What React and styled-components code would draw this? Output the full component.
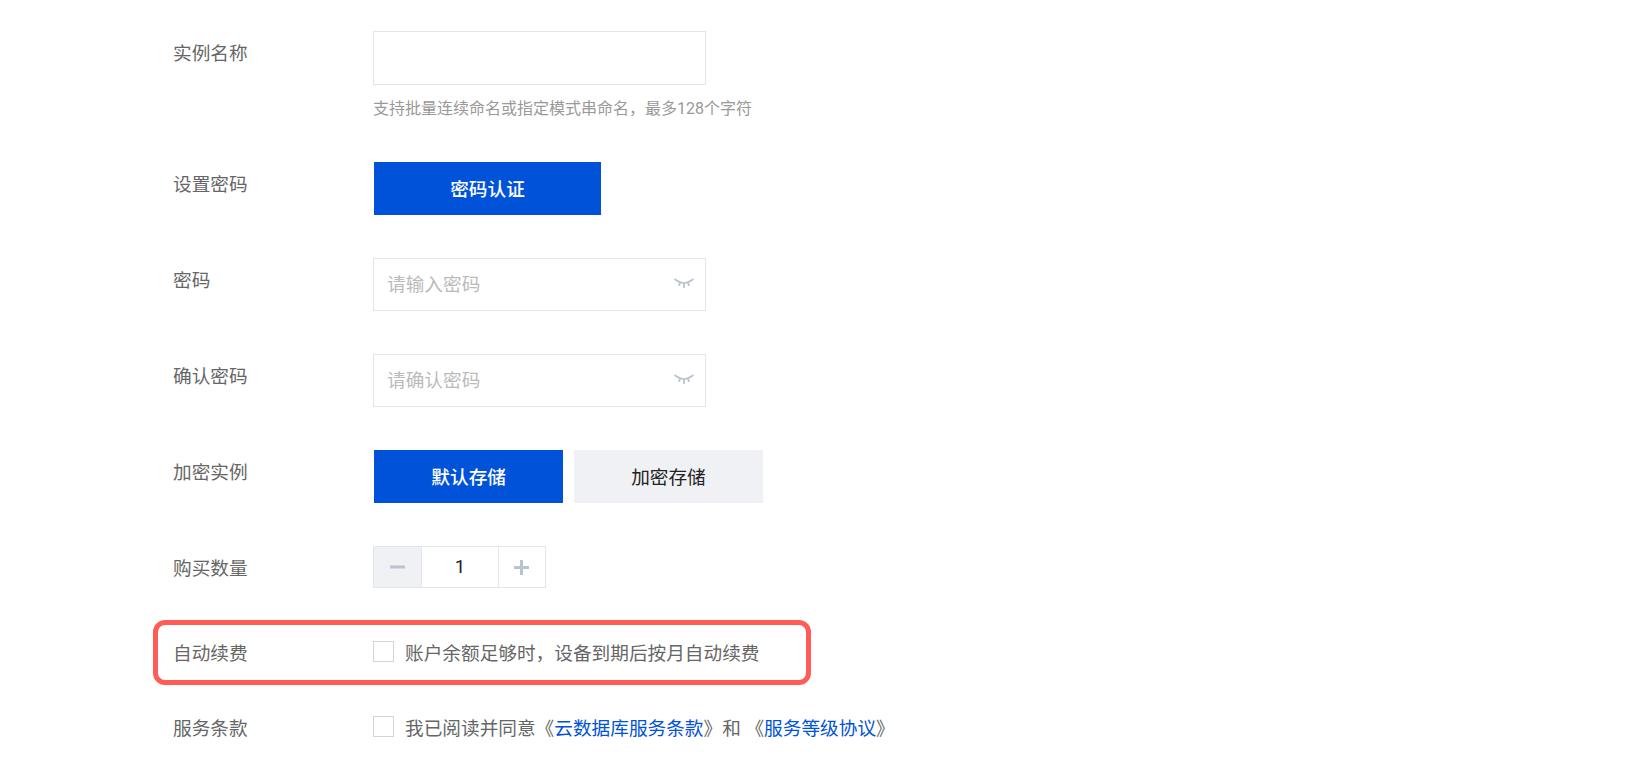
import React from "react";
import styled, { createGlobalStyle } from "styled-components";

const GlobalStyle = createGlobalStyle`
  html, body {
    margin: 0;
    padding: 0;
    background: #fff;
    overflow: hidden;
  }
  *, *::before, *::after {
    box-sizing: border-box;
  }
  body, input, button {
    font-family: Roboto, "Noto Sans CJK SC", sans-serif;
  }
`;

const EyeClosed = () => (
  <svg width="20" height="11" viewBox="0 0 20 11" fill="none" stroke="#b9c3d1" strokeWidth="1.800">
    <path d="M3 2.500C7 6 13 6 17 2.500" />
    <path d="M0.500 1L3.500 3M19.500 1L16.500 3M6 5L5 8M14 5L15 8M10 6V10" />
  </svg>
);

const Minus = () => (
  <svg width="15" height="16" viewBox="0 0 15 16" fill="#b9c3d1">
    <rect x="0" y="6.500" width="15" height="3" />
  </svg>
);

const Plus = () => (
  <svg width="15" height="15" viewBox="0 0 15 15" fill="#b9c3d1">
    <rect x="0" y="6" width="15" height="3" />
    <rect x="6" y="0" width="3" height="15" />
  </svg>
);

const PasswordField = ({ placeholder }) => (
  <InputBox>
    <PasswordInput type="password" placeholder={placeholder} />
    <EyeButton>
      <EyeClosed />
    </EyeButton>
  </InputBox>
);

export default function App() {
  return (
    <Form>
      <GlobalStyle />
      <Row $bottom={130.5}>
        <Label>实例名称</Label>
        <div>
          <TextInput type="text" />
          <Hint>支持批量连续命名或指定模式串命名，最多128个字符</Hint>
        </div>
      </Row>
      <Row $bottom={96.5}>
        <Label>设置密码</Label>
        <Segments>
          <Segment $active $width={227}>密码认证</Segment>
        </Segments>
      </Row>
      <Row $bottom={96}>
        <Label>密码</Label>
        <PasswordField placeholder="请输入密码" />
      </Row>
      <Row $bottom={96}>
        <Label>确认密码</Label>
        <PasswordField placeholder="请确认密码" />
      </Row>
      <Row $bottom={96}>
        <Label>加密实例</Label>
        <Segments>
          <Segment $active $width={189.300}>默认存储</Segment>
          <Segment $width={189.300}>加密存储</Segment>
        </Segments>
      </Row>
      <Row $bottom={85}>
        <Label>购买数量</Label>
        <Stepper>
          <StepButton $disabled><Minus /></StepButton>
          <StepValue>1</StepValue>
          <StepButton><Plus /></StepButton>
        </Stepper>
      </Row>
      <Row $bottom={75} $marked>
        <Label>自动续费</Label>
        <CheckLine>
          <CheckBox type="checkbox" />
          <span>账户余额足够时，设备到期后按月自动续费</span>
        </CheckLine>
      </Row>
      <Row $bottom={0}>
        <Label>服务条款</Label>
        <CheckLine>
          <CheckBox type="checkbox" />
          <span>
            我已阅读并同意《<LinkText>云数据库服务条款</LinkText>》和 《<LinkText>服务等级协议</LinkText>》
          </span>
        </CheckLine>
      </Row>
    </Form>
  );
}

const Form = styled.form`
  padding: 31px 0 0 173px;
  width: 1632px;
  height: 766px;
`;

const Row = styled.div`
  position: relative;
  display: grid;
  grid-template-columns: 200px 1fr;
  height: ${(props) => props.$bottom}px;
  ${(props) =>
    props.$marked &&
    `
    &::after {
      content: "";
      position: absolute;
      left: -20px;
      top: -11px;
      width: 658px;
      height: 65px;
      border: 5px solid #ff5c57;
      border-radius: 12px;
    }
  `}
`;

const Label = styled.div`
  padding-top: 7px;
  font-size: 18.67px;
  line-height: 32px;
  color: #666;
`;

const TextInput = styled.input`
  display: block;
  width: 333.300px;
  height: 54px;
  border: 1.300px solid #e1e5ec;
  outline: none;
  background: #fff;
`;

const Hint = styled.div`
  margin-top: 12px;
  font-size: 16px;
  line-height: 24px;
  color: #999;
`;

const InputBox = styled.div`
  position: relative;
  width: 333.300px;
  height: 53.300px;
  align-self: start;
`;

const PasswordInput = styled.input`
  width: 100%;
  height: 100%;
  padding: 0 50px 0 13px;
  border: 1.300px solid #e1e5ec;
  outline: none;
  background: #fff;
  font-size: 18.67px;
  &::placeholder {
    color: #bbb;
    opacity: 1;
  }
`;

const EyeButton = styled.span`
  position: absolute;
  right: 12px;
  top: 20px;
  display: flex;
`;

const Segments = styled.div`
  display: flex;
  gap: 10.500px;
  align-items: flex-start;
  padding-left: 1px;
`;

const Segment = styled.button`
  width: ${(props) => props.$width}px;
  height: 53.300px;
  border: none;
  padding: 0 0 2px;
  font-size: 18.67px;
  font-weight: ${(props) => (props.$active ? 500 : 400)};
  color: ${(props) => (props.$active ? "#fff" : "#222")};
  background: ${(props) => (props.$active ? "#0052d9" : "#f0f1f5")};
`;

const Stepper = styled.div`
  display: flex;
  align-self: start;
  width: 173px;
  height: 42px;
  border: 1.300px solid #e1e5ec;
`;

const StepButton = styled.div`
  flex: 0 0 46.500px;
  display: flex;
  align-items: center;
  justify-content: center;
  background: ${(props) => (props.$disabled ? "#f0f1f5" : "#fff")};
`;

const StepValue = styled.div`
  flex: 1;
  display: flex;
  align-items: center;
  justify-content: center;
  padding-left: 1px;
  border-left: 1.300px solid #e1e5ec;
  border-right: 1.300px solid #e1e5ec;
  font-size: 18.67px;
  color: #222;
`;

const CheckLine = styled.label`
  display: flex;
  align-items: center;
  align-self: start;
  height: 41px;
  font-size: 18.67px;
  color: #666;
`;

const CheckBox = styled.input`
  appearance: none;
  flex: none;
  width: 21px;
  height: 21px;
  margin: 0 11px 0 0;
  border: 1.300px solid #cfd5de;
  background: #fff;
`;

const LinkText = styled.a`
  color: #0052d9;
`;
